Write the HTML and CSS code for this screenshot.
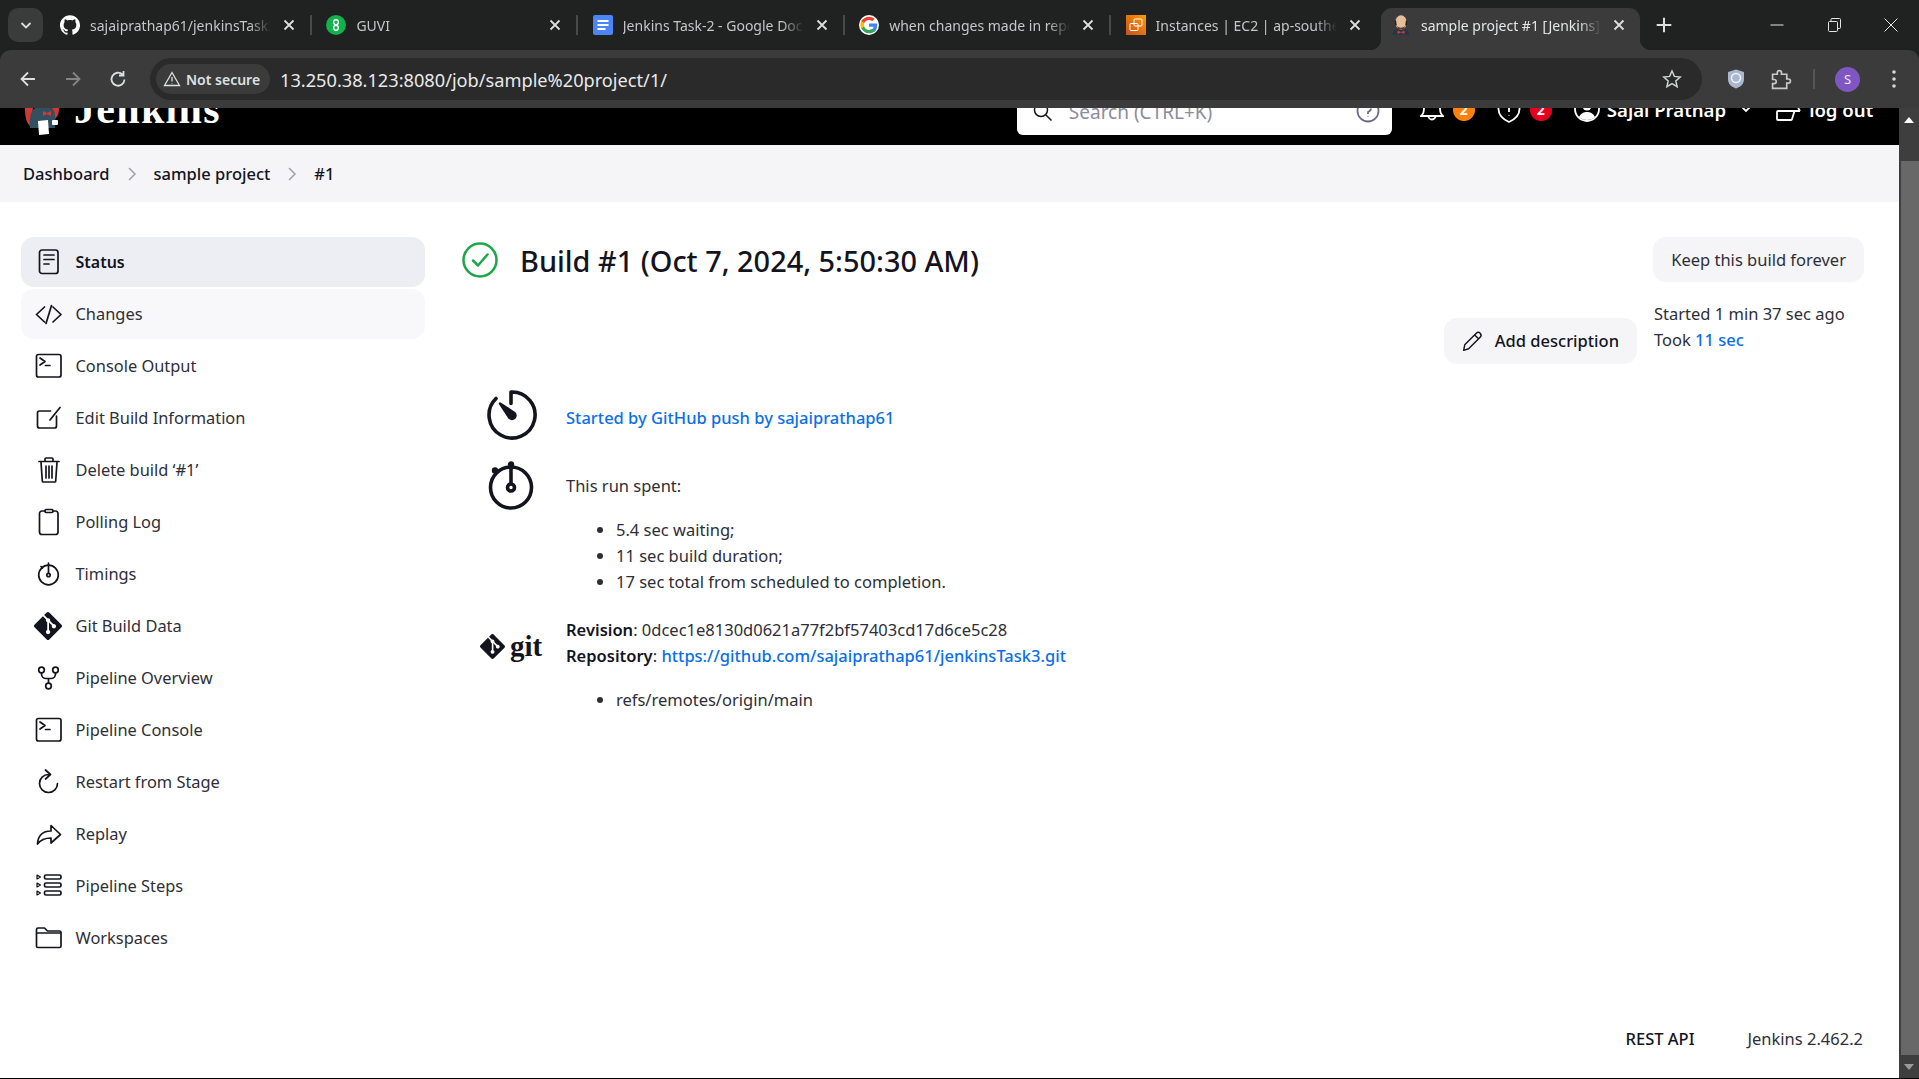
FILE: index.html
```html
<!DOCTYPE html>
<html lang="en">
<head>
    <meta charset="UTF-8">
    <title>sample project #1 [Jenkins]</title>
    <link rel="stylesheet" href="styles.css">
</head>
<body>
    <div class="tab-strip">
        <div class="tab-search"><svg width="16" height="16" viewBox="0 0 16 16"><path class="chrome-line" d="M3.5 6 8 10.5 12.5 6"/></svg></div>
        <div class="tab">
            <svg class="favicon" viewBox="0 0 24 24"><path fill="#fff" d="M12 .297c-6.63 0-12 5.373-12 12 0 5.303 3.438 9.8 8.205 11.385.6.113.82-.258.82-.577 0-.285-.01-1.04-.015-2.04-3.338.724-4.042-1.61-4.042-1.61C4.422 18.07 3.633 17.7 3.633 17.7c-1.087-.744.084-.729.084-.729 1.205.084 1.838 1.236 1.838 1.236 1.07 1.835 2.809 1.305 3.495.998.108-.776.417-1.305.76-1.605-2.665-.3-5.466-1.332-5.466-5.93 0-1.31.465-2.38 1.235-3.22-.135-.303-.54-1.523.105-3.176 0 0 1.005-.322 3.3 1.23.96-.267 1.98-.399 3-.405 1.02.006 2.04.138 3 .405 2.28-1.552 3.285-1.23 3.285-1.23.645 1.653.24 2.873.12 3.176.765.84 1.23 1.91 1.23 3.22 0 4.61-2.805 5.625-5.475 5.92.42.36.81 1.096.81 2.22 0 1.606-.015 2.896-.015 3.286 0 .315.21.69.825.57C20.565 22.092 24 17.592 24 12.297c0-6.627-5.373-12-12-12"/></svg>
            <span class="tab-title">sajaiprathap61/jenkinsTask3</span>
            <svg class="tab-close" viewBox="0 0 14 14"><path class="chrome-line" d="M2.5 2.5l9 9M11.5 2.5l-9 9"/></svg>
            <span class="tab-sep"></span>
        </div>
        <div class="tab">
            <svg class="favicon" viewBox="0 0 20 20"><circle cx="10" cy="10" r="10" fill="#12b24c"/><g fill="none" stroke="#fff" stroke-width="1.4"><circle cx="10" cy="7.2" r="2.4"/><circle cx="10" cy="12.8" r="2.4"/></g></svg>
            <span class="tab-title">GUVI</span>
            <svg class="tab-close" viewBox="0 0 14 14"><path class="chrome-line" d="M2.5 2.5l9 9M11.5 2.5l-9 9"/></svg>
            <span class="tab-sep"></span>
        </div>
        <div class="tab">
            <svg class="favicon" viewBox="0 0 20 20"><rect x="0" width="20" height="20" rx="2" fill="#4a86f5"/><path d="M4.5 6h11M4.5 10h11M4.5 14h8" stroke="#fff" stroke-width="2"/></svg>
            <span class="tab-title">Jenkins Task-2 - Google Docs</span>
            <svg class="tab-close" viewBox="0 0 14 14"><path class="chrome-line" d="M2.5 2.5l9 9M11.5 2.5l-9 9"/></svg>
            <span class="tab-sep"></span>
        </div>
        <div class="tab">
            <svg class="favicon" viewBox="0 0 48 48"><circle cx="24" cy="24" r="24" fill="#fff"/><path fill="#4285f4" d="M43.6 24.5c0-1.4-.1-2.8-.4-4.100H24v8h11.200c-.5 2.600-2 4.800-4.200 6.300v5.200h6.800c4-3.700 5.800-9.100 5.800-15.400z"/><path fill="#34a853" d="M24 44c5.400 0 10-1.800 13.800-5.100L31 33.700c-1.900 1.300-4.300 2-7 2-5.300 0-9.900-3.600-11.500-8.400h-7v5.300C9.900 40 16.500 44 24 44z"/><path fill="#fbbc05" d="M12.500 27.300c-.9-2.600-.9-5.500 0-8.100v-5.300h-7c-3 5.900-3 12.800 0 18.700z"/><path fill="#ea4335" d="M24 11.900c3 0 5.700 1 7.800 3l5.900-5.900C34 5.800 29.300 4 24 4 16.500 4 9.900 8.200 5.500 13.900l7 5.300C14.100 15.300 18.700 11.900 24 11.900z"/></svg>
            <span class="tab-title">when changes made in repo</span>
            <svg class="tab-close" viewBox="0 0 14 14"><path class="chrome-line" d="M2.5 2.5l9 9M11.5 2.5l-9 9"/></svg>
            <span class="tab-sep"></span>
        </div>
        <div class="tab">
            <svg class="favicon" viewBox="0 0 20 20"><defs><linearGradient id="ec2" x1="0" y1="1" x2="1" y2="0"><stop offset="0" stop-color="#c8511b"/><stop offset="1" stop-color="#ff9900"/></linearGradient></defs><rect width="20" height="20" fill="url(#ec2)"/><g fill="none" stroke="#fff" stroke-width="1"><rect x="8" y="4" width="8" height="7" rx="1"/><rect x="4" y="8.500" width="8" height="7" rx="1"/></g></svg>
            <span class="tab-title">Instances | EC2 | ap-southeast</span>
            <svg class="tab-close" viewBox="0 0 14 14"><path class="chrome-line" d="M2.5 2.5l9 9M11.5 2.5l-9 9"/></svg>
        </div>
        <div class="tab tab-active">
            <svg class="favicon" viewBox="0 0 20 20"><path d="M1.500 20c0-4 3.500-6.500 8.500-6.500s8.500 2.500 8.500 6.500z" fill="#22384a"/><ellipse cx="10" cy="7.500" rx="5.800" ry="7.200" fill="#e3bf9c"/><path d="M4.200 10.500c-1.200-3-.3-5.500.8-5.500l.8 5.500zM15.800 10.500c1.200-3 .3-5.500-.8-5.500l-.8 5.500z" fill="#2e2320"/><path d="M6 11c2.600 2.300 5.400 2.300 8 0l-1 3.500H7z" fill="#5b4032"/><path d="M6.500 15.500l3.500 1.400 3.500-1.400v3.400l-3.500-1.400-3.500 1.400z" fill="#d33833"/></svg>
            <span class="tab-title">sample project #1 [Jenkins]</span>
            <svg class="tab-close" viewBox="0 0 14 14"><path class="chrome-line" d="M2.5 2.5l9 9M11.5 2.5l-9 9"/></svg>
        </div>
        <svg class="new-tab" viewBox="0 0 16 16"><path class="chrome-line" d="M8 1.500v13M1.500 8h13"/></svg>
        <div class="window-controls">
            <svg viewBox="0 0 16 16"><path class="win-line" d="M1.500 8h13"/></svg>
            <svg viewBox="0 0 16 16"><path class="win-line" d="M2.500 5.500a1 1 0 0 1 1-1h7a1 1 0 0 1 1 1v8a1 1 0 0 1-1 1h-7a1 1 0 0 1-1-1zM5 4.500v-2a1 1 0 0 1 1-1h7.500a1 1 0 0 1 1 1v8a1 1 0 0 1-1 1h-2"/></svg>
            <svg viewBox="0 0 16 16"><path class="win-line" d="M1.500 1.500l13 13M14.500 1.500l-13 13"/></svg>
        </div>
    </div>

    <div class="toolbar">
        <div class="nav-buttons">
            <svg viewBox="0 0 18 18"><path class="chrome-line" d="M16 9H2.500M9 2.500 2.500 9 9 15.500"/></svg>
            <svg class="nav-off" viewBox="0 0 18 18"><path class="chrome-line" d="M2 9h13.500M9 2.500 15.500 9 9 15.500"/></svg>
            <svg viewBox="0 0 18 18"><path class="chrome-line" d="M15.500 9.500a6.500 6.500 0 1 1-2-5M14.500 1v4.500H10"/></svg>
        </div>
        <div class="omnibox">
            <div class="security-chip">
                <svg width="18" height="18" viewBox="0 0 18 18"><path class="chip-line" d="M9 2.500 16.500 15.500h-15zM9 7v4.500M9 13v.500"/></svg>
                <span>Not secure</span>
            </div>
            <span class="url">13.250.38.123:8080/job/sample%20project/1/</span>
            <svg class="star" viewBox="0 0 20 20"><path class="star-line" d="M10 2l2.400 5.400 5.800.6-4.400 3.900 1.300 5.700-5.100-3-5.100 3 1.300-5.700L1.800 8l5.800-.6z"/></svg>
        </div>
        <div class="toolbar-right">
            <svg class="ext-shield" viewBox="0 0 18 20"><path d="M9 .5 17 3v7.500c0 4.500-3.500 7.500-8 9-4.500-1.500-8-4.500-8-9V3z" fill="#a9b8d0"/><circle cx="9" cy="9" r="4.500" fill="none" stroke="#eef1f6" stroke-width="1.600"/></svg>
            <svg class="ext-puzzle" viewBox="0 0 20 20"><path class="puzzle-line" d="M1.500 5h4.500V3.500a2 2 0 0 1 4 0V5h5v4.500h1.500a2 2 0 0 1 0 4H15v5H1.500v-4.500H3a2 2 0 0 0 0-4H1.500z"/></svg>
            <span class="toolbar-sep"></span>
            <span class="avatar">S</span>
            <svg class="kebab" viewBox="0 0 6 20"><circle cx="3" cy="3" r="1.800"/><circle cx="3" cy="10" r="1.800"/><circle cx="3" cy="17" r="1.800"/></svg>
        </div>
    </div>

    <div class="viewport">
        <div class="page">
            <header class="jenkins-header">
                <svg class="logo" width="36" height="60" viewBox="0 0 36 60"><path d="M1 33c0 8 1 14 5 18l3-18zM35 33c0 5-1 8-4 11l-3-11z" fill="#d33833"/><path d="M6 53c-1-10 1-20 6-20h14c5 0 6 8 5 20z" fill="#335061"/><path d="M19 36l4 2 4-2v5l-4-2-4 2z" fill="#d33833"/><path d="M14 46l10-1 1 14-10 1z" fill="#fff"/><rect x="28" y="45" width="6" height="5" rx="1" fill="#fff"/></svg>
                <span class="brand">Jenkins</span>
                <div class="search-box">
                    <svg width="22" height="22" viewBox="0 0 22 22"><circle cx="9" cy="9" r="6.500" class="search-line"/><path d="M14 14l5.500 5.500" class="search-line"/></svg>
                    <span class="search-text">Search (CTRL+K)</span>
                    <svg width="24" height="24" viewBox="0 0 24 24"><circle cx="12" cy="12" r="10.500" fill="none" stroke="#6d6b8c" stroke-width="1.800"/><path d="M12 15v-2c2.500-1 3-2 3-3.500M12 17.500v.500" fill="none" stroke="#6d6b8c" stroke-width="1.800"/></svg>
                </div>
                <svg class="head-icon head-bell" width="24" height="28" viewBox="0 0 24 28"><path class="head-line" d="M1 21c2-2 3-3 3-9a8 8 0 0 1 16 0c0 6 1 7 3 9zM8.500 21a3.500 3.500 0 0 0 7 0"/></svg>
                <span class="badge badge-warn">2</span>
                <svg class="head-icon head-shield" width="24" height="28" viewBox="0 0 24 28"><path class="head-line" d="M1.500 2v12c0 6 4 10 10.500 13 6.500-3 10.500-7 10.500-13V2M12 8v9M12 20.500v.500"/></svg>
                <span class="badge badge-danger">2</span>
                <svg class="head-icon head-user" width="26" height="26" viewBox="0 0 26 26"><circle cx="13" cy="13" r="12" fill="none" stroke="#fff" stroke-width="1.800"/><circle cx="13" cy="10" r="4.500" fill="#fff"/><path d="M5 21c2-4 5-5 8-5s6 1 8 5c-4 4-12 4-16 0z" fill="#fff"/></svg>
                <span class="user-name">Sajai Prathap</span>
                <svg class="head-icon head-chevron" width="12" height="8" viewBox="0 0 12 8"><path class="head-line" d="M1.500 1.500 6 6l4.500-4.500"/></svg>
                <svg class="head-icon head-logout" width="26" height="26" viewBox="0 0 26 26"><path class="head-line" d="M25 16H3a1 1 0 0 0-1 1v7a1 1 0 0 0 1 1h13a1 1 0 0 0 1-.7L19.500 16M21 9l4 7"/></svg>
                <span class="logout-text">log out</span>
            </header>

            <nav class="breadcrumbs">
                <span>Dashboard</span>
                <svg class="crumb-sep" width="10" height="16" viewBox="0 0 10 16"><path d="M2 2l6 6-6 6"/></svg>
                <span>sample project</span>
                <svg class="crumb-sep" width="10" height="16" viewBox="0 0 10 16"><path d="M2 2l6 6-6 6"/></svg>
                <span>#1</span>
            </nav>

            <div class="page-body">
                <aside class="side-menu">
                    <div class="menu-item active">
                        <svg class="menu-icon" viewBox="0 0 28 28"><rect x="5.500" y="2" width="18.500" height="23.500" rx="2.500"/><path d="M10 7h10M10 11.500h10M10 16h5"/></svg>
                        <span>Status</span>
                    </div>
                    <div class="menu-item hover">
                        <svg class="menu-icon" viewBox="0 0 28 28"><path d="M10.500 7 2.500 14.500l8 7.500M19 7l8 7.500-8 7.500M17.500 5.500 12 23.500"/></svg>
                        <span>Changes</span>
                    </div>
                    <div class="menu-item">
                        <svg class="menu-icon" viewBox="0 0 28 28"><rect x="2.500" y="2.500" width="24.500" height="22.500" rx="2"/><path d="M6 6l5 3.500-5 3.500M11.500 13.500H16"/></svg>
                        <span>Console Output</span>
                    </div>
                    <div class="menu-item">
                        <svg class="menu-icon" viewBox="0 0 28 28"><path d="M16.500 7H5.500a2 2 0 0 0-2 2v13a2 2 0 0 0 2 2h15a2 2 0 0 0 2-2V12M16 16 26 3.500"/></svg>
                        <span>Edit Build Information</span>
                    </div>
                    <div class="menu-item">
                        <svg class="menu-icon" viewBox="0 0 28 28"><path d="M5 5.500h20M7 6l1.300 19a1 1 0 0 0 1 1h11.400a1 1 0 0 0 1-1L23 6M11 5V3a1 1 0 0 1 1-1h6a1 1 0 0 1 1 1v2M12 10v12M15 10v12M18 10v12"/></svg>
                        <span>Delete build ‘#1’</span>
                    </div>
                    <div class="menu-item">
                        <svg class="menu-icon" viewBox="0 0 28 28"><path d="M11 3H8a2.500 2.500 0 0 0-2.500 2.500V24A2.500 2.500 0 0 0 8 26.500h13.500A2.500 2.500 0 0 0 24 24V5.500A2.500 2.500 0 0 0 21.500 3H19"/><rect x="11" y="1.500" width="8" height="3" rx="1.200"/></svg>
                        <span>Polling Log</span>
                    </div>
                    <div class="menu-item">
                        <svg class="menu-icon" viewBox="0 0 28 28"><circle cx="14.500" cy="15" r="9.800"/><path d="M14.500 3v10M7 6.500 8.500 8"/><circle cx="14.500" cy="15" r="1.700"/></svg>
                        <span>Timings</span>
                    </div>
                    <div class="menu-item">
                        <svg class="menu-icon solid" viewBox="0 0 24 24"><path d="M23.546 10.930L13.067.452c-.604-.603-1.582-.603-2.188 0L8.708 2.627l2.760 2.760c.645-.215 1.379-.07 1.889.441.516.515.658 1.258.438 1.900l2.658 2.660c.645-.223 1.387-.078 1.900.435.721.72.721 1.884 0 2.604-.719.719-1.881.719-2.600 0-.539-.541-.674-1.337-.404-1.996L12.860 8.955v6.525c.176.086.342.203.488.348.713.721.713 1.883 0 2.600-.719.721-1.889.721-2.609 0-.719-.719-.719-1.879 0-2.598.182-.18.387-.316.605-.406V8.835c-.217-.091-.424-.222-.6-.401-.545-.545-.676-1.342-.396-2.009L7.636 3.700.450 10.881c-.6.605-.6 1.584 0 2.189l10.480 10.477c.604.604 1.582.604 2.186 0l10.430-10.430c.605-.603.605-1.582 0-2.187"/></svg>
                        <span>Git Build Data</span>
                    </div>
                    <div class="menu-item">
                        <svg class="menu-icon" viewBox="0 0 28 28"><circle cx="7.500" cy="6" r="2.800"/><circle cx="21.500" cy="6" r="2.800"/><circle cx="14.500" cy="22" r="2.800"/><path d="M7.500 9v1a4.500 4.500 0 0 0 4.500 4.500h5a4.500 4.500 0 0 0 4.500-4.500V9M14.500 14.500v4.700"/></svg>
                        <span>Pipeline Overview</span>
                    </div>
                    <div class="menu-item">
                        <svg class="menu-icon" viewBox="0 0 28 28"><rect x="2.500" y="2.500" width="24.500" height="22.500" rx="2"/><path d="M6 6l5 3.500-5 3.500M11.500 13.500H16"/></svg>
                        <span>Pipeline Console</span>
                    </div>
                    <div class="menu-item">
                        <svg class="menu-icon" viewBox="0 0 28 28"><path d="M14.500 6.500a9 9 0 1 0 9 9M11.500 2l5 4.500-5 4.500"/></svg>
                        <span>Restart from Stage</span>
                    </div>
                    <div class="menu-item">
                        <svg class="menu-icon" viewBox="0 0 28 28"><path d="M17 5.500 26.500 14.500 17 23v-5c-7 0-10.500 2-13.500 6C4 16 8.500 11 17 11z"/></svg>
                        <span>Replay</span>
                    </div>
                    <div class="menu-item">
                        <svg class="menu-icon" viewBox="0 0 28 28"><path class="thin" d="M3 3l3.500 2L3 7zM3 11l3.500 2L3 15zM3 19l3.500 2L3 23z"/><rect x="10.500" y="3" width="16.500" height="4" rx="1.500"/><rect x="10.500" y="11" width="16.500" height="4" rx="1.500"/><rect x="10.500" y="19" width="16.500" height="4" rx="1.500"/></svg>
                        <span>Pipeline Steps</span>
                    </div>
                    <div class="menu-item">
                        <svg class="menu-icon" viewBox="0 0 28 28"><path d="M2.500 22V5.500a1.500 1.500 0 0 1 1.500-1.500h6.500l3 3h12a1.500 1.500 0 0 1 1.500 1.500V22a1.500 1.500 0 0 1-1.500 1.500H4A1.500 1.500 0 0 1 2.500 22zM2.500 9H27"/></svg>
                        <span>Workspaces</span>
                    </div>
                </aside>

                <main class="build-main">
                    <div class="title-row">
                        <svg class="status-icon" width="36" height="36" viewBox="0 0 36 36"><circle cx="18" cy="18" r="16.500"/><path d="M11 18.500l5 5 9.500-11"/></svg>
                        <h1>Build #1 (Oct 7, 2024, 5:50:30 AM)</h1>
                        <span class="btn btn-keep">Keep this build forever</span>
                    </div>
                    <div class="meta-row">
                        <span class="btn btn-desc">
                            <svg width="22" height="22" viewBox="0 0 20 20"><path d="M1.500 18.500l1-5L13 3a2.300 2.300 0 0 1 3.500 3.500L6 17zM11.500 4.500l3.500 3.500"/></svg>
                            Add description
                        </span>
                        <div class="meta-text">
                            <div>Started 1 min 37 sec ago</div>
                            <div>Took <a class="link">11 sec</a></div>
                        </div>
                    </div>

                    <div class="detail-row detail-started">
                        <div class="detail-icon">
                            <svg class="big-icon" width="56" height="56" viewBox="0 0 56 56"><path d="M13 11.500A23 23 0 1 0 28 5v11.500"/><path class="filled" d="M17 16.500 31.500 26a3.500 3.500 0 0 1-5 5z"/></svg>
                        </div>
                        <a class="link">Started by GitHub push by sajaiprathap61</a>
                    </div>

                    <div class="detail-row detail-timing">
                        <div class="detail-icon">
                            <svg class="big-icon" width="56" height="56" viewBox="0 0 56 56"><circle cx="28" cy="28.500" r="20.500"/><path d="M28 8v16"/><circle cx="28" cy="28.500" r="3.500"/><circle class="filled" cx="28" cy="5.500" r="2"/><circle class="filled" cx="12" cy="11.500" r="2"/></svg>
                        </div>
                        <div class="detail-text">
                            <div>This run spent:</div>
                            <ul>
                                <li>5.4 sec waiting;</li>
                                <li>11 sec build duration;</li>
                                <li>17 sec total from scheduled to completion.</li>
                            </ul>
                        </div>
                    </div>

                    <div class="detail-row detail-git">
                        <div class="detail-icon git-logo">
                            <svg width="25" height="25" viewBox="0 0 24 24"><path fill="#14141f" d="M23.546 10.930L13.067.452c-.604-.603-1.582-.603-2.188 0L8.708 2.627l2.760 2.760c.645-.215 1.379-.07 1.889.441.516.515.658 1.258.438 1.900l2.658 2.660c.645-.223 1.387-.078 1.900.435.721.72.721 1.884 0 2.604-.719.719-1.881.719-2.600 0-.539-.541-.674-1.337-.404-1.996L12.860 8.955v6.525c.176.086.342.203.488.348.713.721.713 1.883 0 2.600-.719.721-1.889.721-2.609 0-.719-.719-.719-1.879 0-2.598.182-.18.387-.316.605-.406V8.835c-.217-.091-.424-.222-.6-.401-.545-.545-.676-1.342-.396-2.009L7.636 3.700.450 10.881c-.6.605-.6 1.584 0 2.189l10.480 10.477c.604.604 1.582.604 2.186 0l10.430-10.430c.605-.603.605-1.582 0-2.187"/></svg>
                            <span>git</span>
                        </div>
                        <div class="detail-text">
                            <div><b>Revision</b>: 0dcec1e8130d0621a77f2bf57403cd17d6ce5c28</div>
                            <div><b>Repository</b>: <a class="link">https://github.com/sajaiprathap61/jenkinsTask3.git</a></div>
                            <ul>
                                <li>refs/remotes/origin/main</li>
                            </ul>
                        </div>
                    </div>
                </main>
            </div>

            <footer class="page-footer">
                <span class="rest-link">REST API</span>
                <span>Jenkins 2.462.2</span>
            </footer>
        </div>

        <div class="scrollbar">
            <span class="arrow-up"></span>
            <div class="thumb"></div>
            <span class="arrow-down"></span>
        </div>
    </div>
</body>
</html>
```

FILE: styles.css
```css
* {
    margin: 0;
    padding: 0;
    box-sizing: border-box;
}

html, body {
    height: 100%;
    overflow: hidden;
}

body {
    display: flex;
    flex-direction: column;
    font-family: "Noto Sans", sans-serif;
    background-color: #202222;
    border-bottom: 1px solid #000;
}

svg {
    flex-shrink: 0;
}

/* browser chrome */
.tab-strip {
    height: 50px;
    display: flex;
    align-items: flex-end;
    padding-left: 8px;
    background-color: #202222;
}

.tab-search {
    width: 35px;
    height: 34px;
    margin: 0 6px 8px 0;
    display: flex;
    align-items: center;
    justify-content: center;
    background-color: #3a3b3b;
    border-radius: 10px;
}

.chrome-line {
    fill: none;
    stroke: #dcdedf;
    stroke-width: 1.8;
}

.win-line {
    fill: none;
    stroke: #e4e4e4;
    stroke-width: 1;
}

.tab {
    width: 266.4px;
    height: 42px;
    padding: 0 0 8px 11px;
    display: flex;
    align-items: center;
    position: relative;
    color: #c4c6c7;
    font-size: 14px;
}

.favicon {
    width: 20px;
    height: 20px;
    margin-right: 10px;
}

.tab-title {
    width: 181px;
    overflow: hidden;
    white-space: nowrap;
    -webkit-mask-image: linear-gradient(90deg, #000 88%, transparent 100%);
    mask-image: linear-gradient(90deg, #000 88%, transparent 100%);
}

.tab-close {
    width: 14px;
    height: 14px;
    margin-left: 11px;
}

.tab-sep {
    width: 2px;
    height: 20px;
    margin-left: 14px;
    background-color: #484a4a;
}

.tab-active {
    width: 259px;
    background-color: #3b3b3b;
    border-radius: 11px 11px 0 0;
    color: #e4e5e6;
    padding-left: 10px;
}

/* flared bottom corners of the open tab */
.tab-active::before,
.tab-active::after {
    content: "";
    position: absolute;
    bottom: 0;
    width: 11px;
    height: 11px;
}

.tab-active::before {
    left: -11px;
    background: radial-gradient(circle at 0 0, transparent 11px, #3b3b3b 11.5px);
}

.tab-active::after {
    right: -11px;
    background: radial-gradient(circle at 100% 0, transparent 11px, #3b3b3b 11.5px);
}

.tab-active .tab-title {
    width: 180px;
}

.new-tab {
    width: 18px;
    height: 18px;
    margin: 0 0 16px 15px;
}

.window-controls {
    margin: 0 20px 17px auto;
    display: flex;
    gap: 41px;
}

.window-controls svg {
    width: 16px;
    height: 16px;
}

.toolbar {
    height: 58px;
    display: flex;
    align-items: center;
    background-color: #3b3b3b;
    border-radius: 11px 11px 0 0;
}

.nav-buttons {
    width: 150px;
    padding: 0 23px 0 19px;
    display: flex;
    justify-content: space-between;
    flex-shrink: 0;
}

.nav-buttons svg {
    width: 18px;
    height: 18px;
}

.nav-off {
    opacity: 0.45;
}

.omnibox {
    flex: 1;
    height: 42px;
    padding: 0 20px 0 6px;
    display: flex;
    align-items: center;
    background-color: #2a2a2a;
    border-radius: 21px;
}

.security-chip {
    width: 114px;
    height: 30px;
    padding-left: 7px;
    display: flex;
    align-items: center;
    gap: 5px;
    background-color: #3b3b3b;
    border-radius: 15px;
    color: #dfe1e3;
    font-size: 14px;
    font-weight: 600;
    white-space: nowrap;
}

.chip-line {
    fill: none;
    stroke: #dfe1e3;
    stroke-width: 1.300;
}

.url {
    margin: 1px 0 0 10px;
    color: #e8e9ea;
    font-size: 18.200px;
}

.star {
    width: 20px;
    height: 20px;
    margin-left: auto;
}

.star-line {
    fill: none;
    stroke: #d0d2d3;
    stroke-width: 1.500;
}

.toolbar-right {
    width: 217px;
    flex-shrink: 0;
    display: flex;
    align-items: center;
    padding-left: 25px;
}

.ext-shield {
    width: 18px;
    height: 20px;
}

.ext-puzzle {
    width: 21px;
    height: 21px;
    margin-left: 26px;
}

.puzzle-line {
    fill: none;
    stroke: #c7c9ca;
    stroke-width: 1.600;
}

.toolbar-sep {
    width: 2px;
    height: 20px;
    margin-left: 21px;
    background-color: #555;
}

.avatar {
    width: 25px;
    height: 25px;
    margin-left: 20px;
    border-radius: 50%;
    display: flex;
    align-items: center;
    justify-content: center;
    background-color: #7e57c2;
    color: #f0e8ff;
    font-size: 13px;
}

.kebab {
    width: 6px;
    height: 20px;
    margin-left: 31px;
    fill: #d5d7d8;
}

/* page */
.viewport {
    flex: 1;
    min-height: 0;
    display: flex;
}

.page {
    flex: 1;
    min-width: 0;
    display: flex;
    flex-direction: column;
    background-color: #fff;
    color: #2e2e38;
    font-size: 16.500px;
    line-height: 26px;
}

.jenkins-header {
    height: 37px;
    flex-shrink: 0;
    display: flex;
    align-items: flex-end;
    overflow: hidden;
    background-color: #000;
    color: #fff;
    padding-left: 24px;
}

.logo {
    margin-bottom: 10px;
}

.brand {
    margin: 0 0 15px 14px;
    font-family: "Liberation Serif", serif;
    font-size: 42px;
    font-weight: 700;
    letter-spacing: 1.300px;
    line-height: 42px;
}

.search-box {
    width: 375px;
    height: 56px;
    margin: 0 0 10px 796px;
    padding: 0 12px 0 15px;
    display: flex;
    align-items: flex-end;
    background-color: #fff;
    border-radius: 6px;
    color: #8c8c9c;
    font-size: 19px;
}

.search-box svg {
    margin-bottom: 12px;
}

.search-text {
    flex: 1;
    margin: 0 0 10px 15px;
    line-height: 26px;
}

.search-line {
    fill: none;
    stroke: #14141f;
    stroke-width: 1.500;
}

.head-icon {
    margin-bottom: 22px;
}

.head-line {
    fill: none;
    stroke: #fff;
    stroke-width: 1.800;
}

.head-bell {
    margin-left: 28px;
}

.head-shield {
    margin-left: 22px;
}

.head-user {
    margin-left: 22px;
    margin-bottom: 23px;
}

.head-chevron {
    margin: 0 0 32px 14px;
}

.head-logout {
    margin: 0 0 24px 23px;
}

.badge {
    width: 22px;
    height: 22px;
    margin: 0 0 24px 9px;
    border-radius: 50%;
    display: flex;
    align-items: center;
    justify-content: center;
    font-size: 14px;
    font-weight: 700;
    color: #fff;
}

.badge-warn {
    background-color: #fe820a;
}

.badge-danger {
    background-color: #e6001f;
}

.user-name,
.logout-text {
    margin-bottom: 22px;
    font-size: 18.600px;
    font-weight: 600;
    white-space: nowrap;
}

.user-name {
    margin-left: 7px;
}

.logout-text {
    margin-left: 8px;
}

.breadcrumbs {
    height: 57px;
    flex-shrink: 0;
    padding-left: 23px;
    display: flex;
    align-items: center;
    gap: 17px;
    background-color: #f5f5f8;
    color: #14141f;
    font-weight: 500;
}

.crumb-sep {
    fill: none;
    stroke: #a0a0ae;
    stroke-width: 1.500;
}

.page-body {
    flex: 1;
    min-height: 0;
    padding: 35px 35px 0 21px;
    display: flex;
    gap: 37px;
}

.side-menu {
    width: 404px;
    flex-shrink: 0;
    display: flex;
    flex-direction: column;
    gap: 2px;
}

.menu-item {
    height: 50px;
    padding-left: 13px;
    display: flex;
    align-items: center;
    gap: 13.500px;
    border-radius: 13px;
    font-size: 16.400px;
}

.menu-item.active {
    background-color: #edeef3;
    font-size: 16px;
    font-weight: 600;
    color: #14141f;
}

.menu-item.hover {
    background-color: #f8f8fa;
}

.menu-icon {
    width: 28px;
    height: 28px;
    fill: none;
    stroke: #14141f;
    stroke-width: 1.700;
    stroke-linecap: round;
    stroke-linejoin: round;
}

.menu-icon .thin {
    stroke-width: 1.200;
}

.menu-icon.solid {
    fill: #14141f;
    stroke: none;
}

.build-main {
    flex: 1;
    min-width: 0;
}

.title-row {
    display: flex;
    align-items: flex-start;
}

.status-icon {
    margin-top: 5px;
    fill: none;
    stroke: #1ea64b;
    stroke-width: 2.500;
    stroke-linecap: round;
    stroke-linejoin: round;
}

h1 {
    flex: 1;
    margin: 1px 0 0 22px;
    color: #14141f;
    font-size: 28.900px;
    font-weight: 500;
    line-height: 46px;
    white-space: nowrap;
}

.btn {
    display: flex;
    align-items: center;
    background-color: #f5f5f8;
    border-radius: 13px;
    white-space: nowrap;
}

.btn-keep {
    height: 45px;
    padding: 0 18px;
}

.btn-desc {
    height: 46px;
    padding: 0 18px;
    gap: 11px;
    color: #14141f;
    font-weight: 500;
}

.btn-desc svg {
    fill: none;
    stroke: #14141f;
    stroke-width: 1.300;
    stroke-linejoin: round;
}

.meta-row {
    margin-top: 34px;
    display: flex;
    justify-content: flex-end;
    gap: 17px;
}

.meta-text {
    width: 210px;
    margin-top: -17px;
    height: 46px;
}

.link {
    color: #0c6fe8;
    font-weight: 500;
}

.detail-row {
    display: flex;
}

.detail-icon {
    width: 98px;
    margin-right: 6px;
    flex-shrink: 0;
    display: flex;
    justify-content: center;
}

.big-icon {
    fill: none;
    stroke: #14141f;
    stroke-width: 3.600;
    stroke-linecap: round;
    stroke-linejoin: round;
}

.big-icon .filled {
    fill: #14141f;
    stroke-width: 2.400;
}

.detail-started {
    margin-top: 23px;
    align-items: center;
}

.detail-started .link {
    margin-top: 5px;
}

.detail-timing {
    margin-top: 16px;
}

.detail-timing .detail-text {
    padding-top: 14px;
}

ul {
    margin-top: 18px;
    padding-left: 50px;
}

.detail-git {
    margin-top: 22px;
}

.detail-text b {
    font-weight: 600;
    color: #14141f;
}

.git-logo {
    height: 58px;
    align-items: center;
    gap: 5px;
    color: #14141f;
    font-family: "Liberation Serif", serif;
    font-size: 29px;
    font-weight: 700;
}

.page-footer {
    height: 78px;
    flex-shrink: 0;
    padding: 26px 36px 0 0;
    display: flex;
    justify-content: flex-end;
    gap: 53px;
}

.rest-link {
    color: #14141f;
    font-weight: 500;
}

/* scrollbar */
.scrollbar {
    width: 20px;
    flex-shrink: 0;
    display: flex;
    flex-direction: column;
    align-items: center;
    background-color: #3e3e3e;
}

.arrow-up {
    margin-top: 9px;
    border: 5px solid transparent;
    border-top: none;
    border-bottom: 6px solid #fff;
}

.thumb {
    flex: 1;
    width: 18px;
    margin: 38px 0 9px 2px;
    background-color: #686868;
}

.arrow-down {
    margin-bottom: 8px;
    border: 5px solid transparent;
    border-bottom: none;
    border-top: 6px solid #9a9a9a;
}
```
